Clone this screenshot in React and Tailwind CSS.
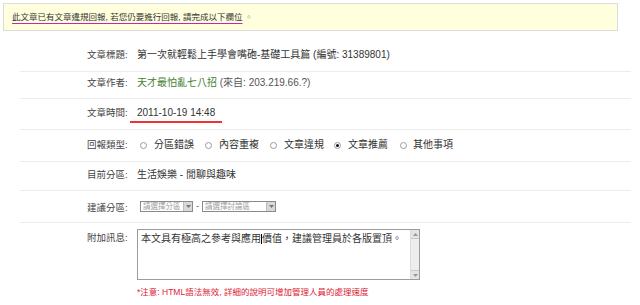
import React from "react";

function Radio({ checked }) {
  return (
    <span className="relative inline-block w-[7px] h-[7px] rounded-full border border-[#9a9a9a] bg-white shrink-0 align-middle">
      {checked && <span className="absolute left-[1px] top-[1px] w-[3px] h-[3px] rounded-full bg-[#111]" />}
    </span>
  );
}

function FakeSelect({ text, w }) {
  return (
    <div className={`flex items-stretch h-[11px] border border-[#8a8a8a] bg-white ${w}`}>
      <div className="flex-1 pl-[2px] text-[7.5px] leading-[9px] text-[#a0a0a0] overflow-hidden whitespace-nowrap">{text}</div>
      <div className="w-[9px] bg-[#d8d8d8] border-l border-[#bcbcbc] flex items-center justify-center">
        <svg width="5" height="3" viewBox="0 0 5 3"><path d="M0 0h5L2.5 3z" fill="#777" /></svg>
      </div>
    </div>
  );
}

function Row({ h, pt, label, children }) {
  return (
    <div className={`flex items-start ${h} ${pt} border-b border-[#ececec]`}>
      <div className="w-[117px] pl-[67px] shrink-0 text-[9.5px] leading-[12px] text-[#444] whitespace-nowrap">{label}:</div>
      <div className="flex-1 text-[10px] leading-[12px] text-[#333] whitespace-nowrap">{children}</div>
    </div>
  );
}

export default function App() {
  return (
    <div className="w-[640px] h-[305px] bg-white overflow-hidden font-['Liberation_Sans','Noto_Sans_CJK_TC',sans-serif]">
      <div className="ml-[3px] mt-[3px] w-[615px] h-[28px] border border-[#dcdcdc] bg-[#ffffdd] pl-[8px] flex items-center text-[8.5px] text-[#333]">
        <span className="underline decoration-[#cc22bb] underline-offset-[3px]">此文章已有文章違規回報, 若您仍要進行回報, 請完成以下欄位</span>
        <span className="ml-[2px] text-[#999]">。</span>
      </div>

      <div className="ml-[20px] w-[611px]">
        <Row h="h-[41px]" pt="pt-[18px]" label="文章標題">
          第一次就輕鬆上手學會嘴砲-基礎工具篇 (編號: 31389801)
        </Row>
        <Row h="h-[27px]" pt="pt-[5px]" label="文章作者">
          <span className="text-[#3f7f2f]">天才最怕亂七八招</span>
          <span className="text-[#555]"> (來自: 203.219.66.?)</span>
        </Row>
        <Row h="h-[31px]" pt="pt-[8px]" label="文章時間">
          <span className="relative">
            2011-10-19 14:48
            <span className="absolute left-[-7px] top-[14px] w-[92px] h-[2px] bg-[#ee3333]" />
          </span>
        </Row>
        <Row h="h-[32px]" pt="pt-[9px]" label="回報類型">
          <div className="flex items-center ml-[3px]">
            <Radio />
            <span className="ml-[7px]">分區錯誤</span>
            <span className="ml-[11px] flex"><Radio /></span>
            <span className="ml-[7px]">內容重複</span>
            <span className="ml-[11px] flex"><Radio /></span>
            <span className="ml-[7px]">文章違規</span>
            <span className="ml-[10px] flex"><Radio checked /></span>
            <span className="ml-[7px]">文章推薦</span>
            <span className="ml-[12px] flex"><Radio /></span>
            <span className="ml-[6px]">其他事項</span>
          </div>
        </Row>
        <Row h="h-[29px]" pt="pt-[7px]" label="目前分區">
          生活娛樂 - 閒聊與趣味
        </Row>
        <Row h="h-[32px]" pt="pt-[11px]" label="建議分區">
          <div className="flex items-center ml-[3px] -mt-[2px]">
            <FakeSelect text="請選擇分區" w="w-[53px]" />
            <span className="mx-[3px] text-[9px] text-[#555]">-</span>
            <FakeSelect text="請選擇討論區" w="w-[74px]" />
          </div>
        </Row>
        <div className="flex items-start pt-[6px]">
          <div className="w-[117px] pl-[67px] shrink-0 pt-[3px] text-[9.5px] leading-[12px] text-[#444] whitespace-nowrap">附加訊息:</div>
          <div className="flex flex-col">
            <div className="flex w-[283px] h-[51px] border border-[#9c9c9c] bg-white">
              <div className="flex-1 pl-[3px] pt-[3px] text-[10px] leading-[12px] text-[#333] whitespace-nowrap">
                本文具有極高之參考與應用<span className="inline-block w-px h-[10px] bg-black align-middle" />價值，建議管理員於各版置頂。
              </div>
              <div className="w-[9px] bg-[#eeeeee] border-l border-[#dcdcdc] flex flex-col justify-between">
                <div className="h-[9px] bg-[#e4e4e4] border-b border-[#c8c8c8] flex items-center justify-center">
                  <svg width="5" height="3" viewBox="0 0 5 3"><path d="M0 3h5L2.5 0z" fill="#999" /></svg>
                </div>
                <div className="h-[9px] bg-[#e4e4e4] border-t border-[#c8c8c8] flex items-center justify-center">
                  <svg width="5" height="3" viewBox="0 0 5 3"><path d="M0 0h5L2.5 3z" fill="#999" /></svg>
                </div>
              </div>
            </div>
            <div className="mt-[6px] text-[8.5px] leading-[12px] text-[#dd2233] whitespace-nowrap">*注意: HTML語法無效, 詳細的說明可增加管理人員的處理速度</div>
          </div>
        </div>
      </div>
    </div>
  );
}
